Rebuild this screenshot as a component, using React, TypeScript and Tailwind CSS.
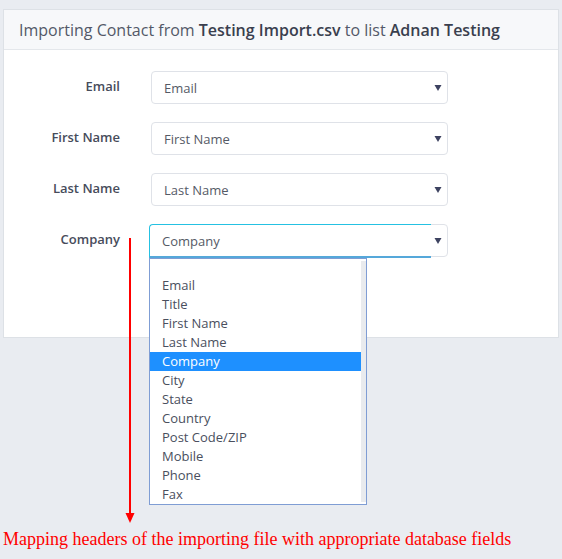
import React from "react";

const Arrow = () => (
  <svg width="8" height="7" viewBox="0 0 8 7" className="absolute right-[6px] top-1/2 -translate-y-1/2">
    <polygon points="0.5,0.5 7.5,0.5 4,6.5" fill="#3d4260" />
  </svg>
);

const options = [
  "Email",
  "Title",
  "First Name",
  "Last Name",
  "Company",
  "City",
  "State",
  "Country",
  "Post Code/ZIP",
  "Mobile",
  "Phone",
  "Fax",
];

function Row({ label, value, open }: { label: string; value: string; open?: boolean }) {
  return (
    <div className="flex items-start">
      <div className="w-[116px] pt-[6px] text-right text-[13px] leading-[18px] font-semibold text-[#474c5b]">
        {label}
      </div>
      <div className="relative ml-[31px] w-[297px] h-[33px]">
        <div className="flex items-center h-[33px] w-[297px] border border-[#dfe2e8] rounded-[4px] bg-white pl-[12px] text-[13px] leading-[18px] text-[#555a66]">
          {open ? null : value}
        </div>
        <Arrow />
        {open && (
          <>
            <div className="absolute left-[-2px] top-0 w-[282px] h-[34px] border-t border-l border-[#25c1e2] border-b-2 border-b-[#55a8da] rounded-tl-[4px] bg-white pl-[12px] flex items-center text-[13px] leading-[18px] text-[#555a66]">
              {value}
            </div>
            <div className="absolute left-[-2px] top-[34px] w-[218px] border border-[#7f9dd4] bg-white flex z-10">
              <div className="w-[211px] flex flex-col">
                <div className="h-[17px]" />
                {options.map((o) => (
                  <div
                    key={o}
                    className={
                      o === "Company"
                        ? "h-[19px] leading-[19px] pl-[12px] text-[13px] bg-[#1e90ff] text-white"
                        : "h-[19px] leading-[19px] pl-[12px] text-[13px] text-[#4a4f5e]"
                    }
                  >
                    {o}
                  </div>
                ))}
              </div>
              <div className="w-[5px] my-[2px] bg-[#e9ebee]" />
            </div>
          </>
        )}
      </div>
    </div>
  );
}

export default function App() {
  return (
    <div
      className="relative w-[562px] h-[559px] bg-[#e9ecf1] overflow-hidden"
      style={{ fontFamily: '"Open Sans", sans-serif' }}
    >
      <div className="ml-[3px] mt-[9px] w-[556px] border border-[#dde1e6] bg-white">
        <div className="h-[40px] bg-[#f7f8fa] border-b border-[#e4e7eb] pl-[15px] flex items-center text-[16px] text-[#535868]">
          <span>
            Importing Contact from <span className="font-semibold text-[#3a3f4e]">Testing Import.csv</span> to list{" "}
            <span className="font-semibold text-[#3a3f4e]">Adnan Testing</span>
          </span>
        </div>
        <div className="pt-[21px] pb-[80px] flex flex-col gap-[18px]">
          <Row label="Email" value="Email" />
          <Row label="First Name" value="First Name" />
          <Row label="Last Name" value="Last Name" />
          <Row label="Company" value="Company" open />
        </div>
      </div>
      <div
        className="ml-[3px] mt-[190px] text-[18px] leading-[22px] text-[#ff0000]"
        style={{ fontFamily: '"Liberation Serif", serif' }}
      >
        Mapping headers of the importing file with appropriate database fields
      </div>
      <svg className="absolute left-[120px] top-[238px] z-20" width="20" height="290" viewBox="0 0 20 290">
        <rect x="9" y="0" width="2" height="277" fill="#ff0000" />
        <polygon points="5.5,275 14.5,275 10,285" fill="#ff0000" />
      </svg>
    </div>
  );
}
